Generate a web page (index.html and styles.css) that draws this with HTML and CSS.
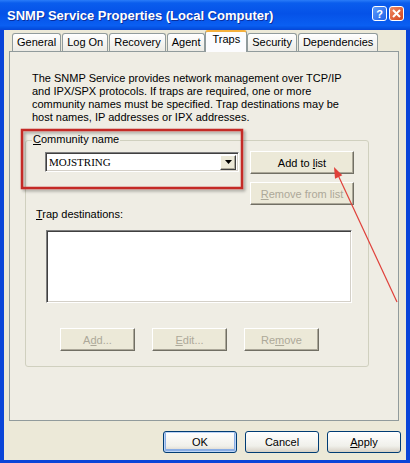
FILE: index.html
```html
<!DOCTYPE html>
<html lang="en">
<head>
  <meta charset="UTF-8">
  <meta name="viewport" content="width=device-width, initial-scale=1.0">
  <title>SNMP Service Properties</title>
  <link rel="stylesheet" href="styles.css">
</head>
<body>
  <div class="window">
    <div class="titlebar">
      <span class="title">SNMP Service Properties (Local Computer)</span>
      <div class="caption-buttons">
        <span class="cap-btn help">?</span>
        <span class="cap-btn close">
          <svg width="9" height="9" viewBox="0 0 9 9"><path d="M1 1 L8 8 M8 1 L1 8" stroke="#fff" stroke-width="2"/></svg>
        </span>
      </div>
    </div>

    <div class="client">
      <ul class="tabs">
        <li>General</li>
        <li>Log On</li>
        <li>Recovery</li>
        <li>Agent</li>
        <li class="active">Traps</li>
        <li>Security</li>
        <li>Dependencies</li>
      </ul>

      <div class="panel">
        <p class="intro">The SNMP Service provides network management over TCP/IP<br>and IPX/SPX protocols. If traps are required, one or more<br>community names must be specified. Trap destinations may be<br>host names, IP addresses or IPX addresses.</p>

        <div class="group">
          <span class="legend"><u>C</u>ommunity name</span>
          <div class="community-row">
            <div class="combo">
              <span class="combo-value">MOJSTRING</span>
              <span class="combo-arrow">
                <svg width="7" height="4" viewBox="0 0 7 4"><path d="M0 0 H7 L3.5 4 Z" fill="#000"/></svg>
              </span>
            </div>
            <div class="list-buttons">
              <button class="btn">Add to <u>l</u>ist</button>
              <button class="btn" disabled><u>R</u>emove from list</button>
            </div>
          </div>

          <div class="trap-label"><u>T</u>rap destinations:</div>
          <div class="listbox"></div>

          <div class="trap-buttons">
            <button class="btn" disabled>A<u>d</u>d...</button>
            <button class="btn" disabled><u>E</u>dit...</button>
            <button class="btn" disabled>Re<u>m</u>ove</button>
          </div>
        </div>
      </div>

      <div class="footer">
        <button class="xp-btn default">OK</button>
        <button class="xp-btn">Cancel</button>
        <button class="xp-btn"><u>A</u>pply</button>
      </div>
    </div>

    <!-- red annotation drawn over the dialog -->
    <svg class="annotation" width="410" height="463" viewBox="0 0 410 463">
      <defs>
        <filter id="shadow" x="-10%" y="-10%" width="130%" height="140%">
          <feDropShadow dx="2" dy="2" stdDeviation="1.5" flood-color="#000" flood-opacity="0.35"/>
        </filter>
      </defs>
      <rect x="22" y="130" width="220" height="58" fill="none" stroke="#c42b25" stroke-width="2.5" filter="url(#shadow)"/>
      <line x1="397" y1="302" x2="338" y2="175" stroke="#e0403a" stroke-width="1.2"/>
      <polygon points="334,167 342.3,175.3 335,178.7" fill="#e0403a"/>
    </svg>
  </div>
</body>
</html>
```

FILE: styles.css
```css
body {
  margin: 0;
  font-family: "Liberation Sans", Arial, sans-serif;
  font-size: 11px;
  color: #000;
}
.window {
  position: relative;
  width: 410px;
  height: 463px;
  display: flex;
  flex-direction: column;
  background: #0a45d8;
  overflow: hidden;
}
.titlebar {
  height: 30px;
  display: flex;
  align-items: center;
  padding-left: 7px;
  background: linear-gradient(#2a7cf8 0%, #0a5ded 10%, #0552e8 45%, #0a5ff2 85%, #0450e0 95%, #0a45d8 100%);
}
.title {
  color: #fff;
  font-weight: bold;
  font-size: 13px;
  line-height: 15px;
  text-shadow: 1px 1px 0 #0a2f9e;
}
.caption-buttons {
  margin-left: auto;
  margin-right: 6px;
  align-self: flex-start;
  margin-top: 6px;
  display: flex;
  gap: 2px;
}
.cap-btn {
  width: 15px;
  height: 15px;
  box-sizing: border-box;
  border: 1px solid #fff;
  border-radius: 3px;
  display: flex;
  align-items: center;
  justify-content: center;
  color: #fff;
  font-weight: bold;
  font-size: 11px;
}
.help {
  background: linear-gradient(135deg, #5c9cfc, #1f5fe8);
}
.close {
  background: linear-gradient(135deg, #f08a64, #d2421b);
}
.client {
  flex: 1;
  margin: 0 4px 3px 4px;
  background: #ece9d8;
}
.tabs {
  list-style: none;
  margin: 0 0 0 8px;
  padding: 0;
  height: 21px;
  display: flex;
  align-items: flex-end;
  gap: 1px;
  position: relative;
  z-index: 1;
}
.tabs li {
  height: 18px;
  box-sizing: border-box;
  padding: 0 4px;
  line-height: 17px;
  border: 1px solid #919b9c;
  border-bottom: none;
  border-radius: 3px 3px 0 0;
  background: linear-gradient(#fff, #ecebe5);
  text-align: center;
}
.tabs li.active {
  height: 22px;
  margin: 0 -1px -1px -1px;
  padding: 0 6px;
  line-height: 15px;
  border-top: 2px solid #f5b03c;
  background: #fcfcfe;
}
.panel {
  margin-left: 5px;
  width: 390px;
  height: 370px;
  box-sizing: border-box;
  border: 1px solid #919b9c;
  background: #efede4;
  padding-top: 20px;
}
.intro {
  margin: 0;
  padding-left: 22px;
  line-height: 13px;
  white-space: nowrap;
}
.group {
  position: relative;
  margin: 16px 0 0 15px;
  width: 344px;
  box-sizing: border-box;
  border: 1px solid #d0d0bf;
  border-radius: 3px;
  padding: 10px 0 15px 0;
}
.legend {
  position: absolute;
  top: -8px;
  left: 6px;
  padding: 0 1px;
  line-height: 13px;
  background: #efede4;
}
.community-row {
  display: flex;
  align-items: flex-start;
  padding-left: 19px;
}
.combo {
  margin-top: 1px;
  width: 194px;
  height: 20px;
  box-sizing: border-box;
  border: 1px solid;
  border-color: #7f7f7f #fff #fff #7f7f7f;
  box-shadow: inset 1px 1px 0 #404040, inset -1px -1px 0 #d4d0c8;
  background: #fff;
  display: flex;
  align-items: center;
  padding: 0 2px 0 3px;
}
.combo-value {
  flex: 1;
  font-family: "Liberation Serif", "Times New Roman", serif;
  font-size: 11px;
}
.combo-arrow {
  width: 16px;
  height: 15px;
  box-sizing: border-box;
  border: 1px solid;
  border-color: #fff #404040 #404040 #fff;
  box-shadow: inset -1px -1px 0 #aca899;
  background: #ece9d8;
  display: flex;
  align-items: center;
  justify-content: center;
}
.list-buttons {
  margin-left: 11px;
  display: flex;
  flex-direction: column;
  gap: 8px;
}
.btn {
  width: 104px;
  height: 23px;
  box-sizing: border-box;
  border: 1px solid;
  border-color: #fff #716f64 #716f64 #fff;
  box-shadow: inset -1px -1px 0 #aca899;
  background: #ece9d8;
  font-family: inherit;
  font-size: 11px;
  color: #000;
  padding: 0;
}
.btn:disabled {
  color: #aca899;
}
.trap-label {
  margin-top: 3px;
  padding-left: 10px;
  line-height: 13px;
}
.listbox {
  margin: 9px 0 0 20px;
  width: 306px;
  height: 73px;
  box-sizing: border-box;
  border: 1px solid;
  border-color: #7f7f7f #fff #fff #7f7f7f;
  box-shadow: inset 1px 1px 0 #404040, inset -1px -1px 0 #d4d0c8;
  background: #fff;
}
.trap-buttons {
  margin-top: 25px;
  padding-left: 34px;
  display: flex;
  gap: 17px;
}
.trap-buttons .btn {
  width: 75px;
}
.footer {
  margin-top: 10px;
  padding-right: 5px;
  display: flex;
  justify-content: flex-end;
  gap: 8px;
}
.xp-btn {
  width: 74px;
  height: 22px;
  box-sizing: border-box;
  border: 1px solid #003c74;
  border-radius: 3px;
  background: linear-gradient(#fff, #f0f0ea 70%, #d6d0c5);
  font-family: inherit;
  font-size: 11px;
  color: #000;
  padding: 0;
}
.xp-btn.default {
  box-shadow: inset 0 0 0 1px #bcd4f6, inset 0 -1px 0 2px #89ade4;
}
.annotation {
  position: absolute;
  top: 0;
  left: 0;
  pointer-events: none;
}
```
